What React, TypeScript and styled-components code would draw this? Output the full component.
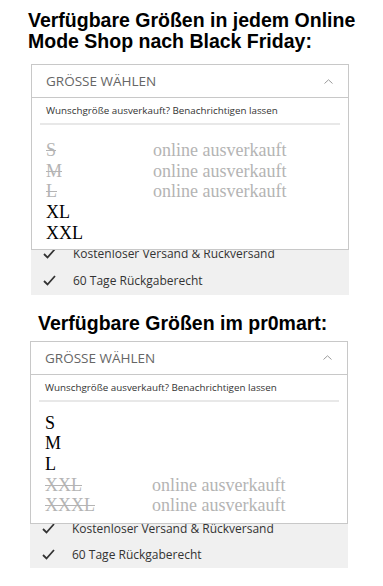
import React from "react";
import styled, { createGlobalStyle } from "styled-components";

const Global = createGlobalStyle`
  html, body { margin: 0; padding: 0; background: #ffffff; }
  body { width: 383px; height: 586px; overflow: hidden; }
`;

const Page = styled.div`
  display: flex;
  flex-direction: column;
`;

const Title = styled.h1<{ $x: number; $top: number; $bottom: number }>`
  margin: ${(p) => p.$top}px 0 ${(p) => p.$bottom}px ${(p) => p.$x}px;
  font-family: "Liberation Sans", Arial, sans-serif;
  font-weight: 700;
  font-size: 19.5px;
  line-height: 21px;
  color: #000;
`;

const Section = styled.div<{ $x: number; $tail: number }>`
  margin-left: ${(p) => p.$x}px;
  width: 318px;
  background: #f0f0f0;
  padding-bottom: ${(p) => p.$tail}px;
  display: flex;
  flex-direction: column;
`;

const SelectBox = styled.div`
  position: relative;
  z-index: 1;
  background: #fff;
  border: 1px solid #c8c8c8;
  display: flex;
  flex-direction: column;
`;

const Header = styled.div`
  height: 33px;
  box-sizing: border-box;
  border-bottom: 1px solid #c8c8c8;
  display: flex;
  align-items: center;
  justify-content: space-between;
  padding: 0 15px 0 14px;
  font-family: "Open Sans", sans-serif;
  font-size: 13.5px;
  color: #666;
`;

const Notice = styled.div`
  margin: 0 8px;
  height: 27px;
  box-sizing: border-box;
  border-bottom: 2px solid #e8e8e8;
  display: flex;
  align-items: center;
  padding-left: 6px;
  font-family: "Open Sans", sans-serif;
  font-size: 9.8px;
  color: #333;
`;

const SizeList = styled.div<{ $pt: number; $pb: number }>`
  display: flex;
  flex-direction: column;
  padding: ${(p) => p.$pt}px 14px ${(p) => p.$pb}px 14px;
  font-family: "Liberation Serif", "Times New Roman", serif;
  font-size: 18px;
  line-height: 20.7px;
`;

const SizeRow = styled.div`
  display: flex;
`;

const Label = styled.span<{ $out: boolean }>`
  width: 107px;
  color: ${(p) => (p.$out ? "#b4b4b4" : "#000")};
  text-decoration: ${(p) => (p.$out ? "line-through" : "none")};
  text-decoration-thickness: 1px;
`;

const Status = styled.span`
  color: #b4b4b4;
`;

const Perks = styled.div`
  margin-top: -9px;
  display: flex;
  flex-direction: column;
`;

const Perk = styled.div`
  height: 26.5px;
  display: flex;
  align-items: center;
  padding-left: 12px;
  gap: 17px;
  font-family: "Open Sans", sans-serif;
  font-size: 12px;
  color: #333;
`;

const Chevron = () => (
  <svg width="9" height="5" viewBox="0 0 9 5">
    <path d="M0.5 4.5 L4.5 0.8 L8.5 4.5" fill="none" stroke="#9a9a9a" strokeWidth="1" />
  </svg>
);

const Check = () => (
  <svg width="13" height="11" viewBox="0 0 13 11">
    <path d="M1 6 L4.5 9.5 L12 1" fill="none" stroke="#333" strokeWidth="1.8" />
  </svg>
);

type Size = { label: string; out: boolean };

const Panel = ({
  x,
  tail,
  pt,
  pb,
  sizes,
}: {
  x: number;
  tail: number;
  pt: number;
  pb: number;
  sizes: Size[];
}) => (
  <Section $x={x} $tail={tail}>
    <SelectBox>
      <Header>
        <span>GRÖSSE WÄHLEN</span>
        <Chevron />
      </Header>
      <Notice>Wunschgröße ausverkauft? Benachrichtigen lassen</Notice>
      <SizeList $pt={pt} $pb={pb}>
        {sizes.map((s) => (
          <SizeRow key={s.label}>
            <Label $out={s.out}>{s.label}</Label>
            {s.out && <Status>online ausverkauft</Status>}
          </SizeRow>
        ))}
      </SizeList>
    </SelectBox>
    <Perks>
      <Perk>
        <Check />
        <span>Kostenloser Versand &amp; Rückversand</span>
      </Perk>
      <Perk>
        <Check />
        <span>60 Tage Rückgaberecht</span>
      </Perk>
    </Perks>
  </Section>
);

export default function App() {
  return (
    <Page>
      <Global />
      <Title $x={28} $top={10} $bottom={12}>
        Verfügbare Größen in jedem Online
        <br />
        Mode Shop nach Black Friday:
      </Title>
      <Panel
        x={31}
        tail={1}
        pt={15}
        pb={5}
        sizes={[
          { label: "S", out: true },
          { label: "M", out: true },
          { label: "L", out: true },
          { label: "XL", out: false },
          { label: "XXL", out: false },
        ]}
      />
      <Title $x={38} $top={18} $bottom={7}>
        Verfügbare Größen im pr0mart:
      </Title>
      <Panel
        x={30}
        tail={0}
        pt={11}
        pb={7}
        sizes={[
          { label: "S", out: false },
          { label: "M", out: false },
          { label: "L", out: false },
          { label: "XXL", out: true },
          { label: "XXXL", out: true },
        ]}
      />
    </Page>
  );
}
